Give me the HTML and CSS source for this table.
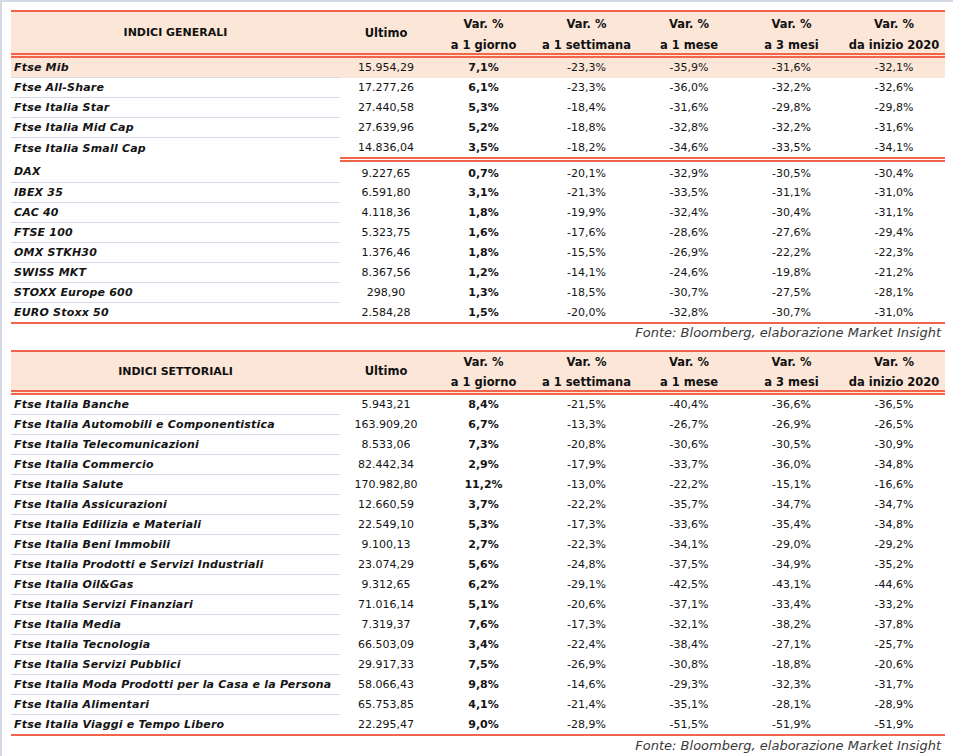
FILE: index.html
```html
<!DOCTYPE html>
<html lang="it">
<head>
<meta charset="utf-8">
<title>Indici</title>
<link rel="stylesheet" href="styles.css">
</head>
<body>
<div class="frame">
  <table class="grid grid-first">
    <colgroup>
      <col class="c-label"><col class="c-last"><col class="c-var"><col class="c-var"><col class="c-var2"><col class="c-var"><col class="c-var2">
    </colgroup>
    <thead>
      <tr>
        <th class="h-label">INDICI GENERALI</th>
        <th>Ultimo</th>
        <th><div class="hd">Var. %<br>a 1 giorno</div></th>
        <th><div class="hd">Var. %<br>a 1 settimana</div></th>
        <th><div class="hd">Var. %<br>a 1 mese</div></th>
        <th><div class="hd">Var. %<br>a 3 mesi</div></th>
        <th><div class="hd">Var. %<br>da inizio 2020</div></th>
      </tr>
    </thead>
    <tbody>
      <tr class="hl"><td class="lbl">Ftse Mib</td><td>15.954,29</td><td class="b">7,1%</td><td>-23,3%</td><td>-35,9%</td><td>-31,6%</td><td>-32,1%</td></tr>
      <tr><td class="lbl">Ftse All-Share</td><td>17.277,26</td><td class="b">6,1%</td><td>-23,3%</td><td>-36,0%</td><td>-32,2%</td><td>-32,6%</td></tr>
      <tr><td class="lbl">Ftse Italia Star</td><td>27.440,58</td><td class="b">5,3%</td><td>-18,4%</td><td>-31,6%</td><td>-29,8%</td><td>-29,8%</td></tr>
      <tr><td class="lbl">Ftse Italia Mid Cap</td><td>27.639,96</td><td class="b">5,2%</td><td>-18,8%</td><td>-32,8%</td><td>-32,2%</td><td>-31,6%</td></tr>
      <tr class="group-end"><td class="lbl">Ftse Italia Small Cap</td><td>14.836,04</td><td class="b">3,5%</td><td>-18,2%</td><td>-34,6%</td><td>-33,5%</td><td>-34,1%</td></tr>
      <tr class="group-start"><td class="lbl">DAX</td><td>9.227,65</td><td class="b">0,7%</td><td>-20,1%</td><td>-32,9%</td><td>-30,5%</td><td>-30,4%</td></tr>
      <tr><td class="lbl">IBEX 35</td><td>6.591,80</td><td class="b">3,1%</td><td>-21,3%</td><td>-33,5%</td><td>-31,1%</td><td>-31,0%</td></tr>
      <tr><td class="lbl">CAC 40</td><td>4.118,36</td><td class="b">1,8%</td><td>-19,9%</td><td>-32,4%</td><td>-30,4%</td><td>-31,1%</td></tr>
      <tr><td class="lbl">FTSE 100</td><td>5.323,75</td><td class="b">1,6%</td><td>-17,6%</td><td>-28,6%</td><td>-27,6%</td><td>-29,4%</td></tr>
      <tr><td class="lbl">OMX STKH30</td><td>1.376,46</td><td class="b">1,8%</td><td>-15,5%</td><td>-26,9%</td><td>-22,2%</td><td>-22,3%</td></tr>
      <tr><td class="lbl">SWISS MKT</td><td>8.367,56</td><td class="b">1,2%</td><td>-14,1%</td><td>-24,6%</td><td>-19,8%</td><td>-21,2%</td></tr>
      <tr><td class="lbl">STOXX Europe 600</td><td>298,90</td><td class="b">1,3%</td><td>-18,5%</td><td>-30,7%</td><td>-27,5%</td><td>-28,1%</td></tr>
      <tr class="last"><td class="lbl">EURO Stoxx 50</td><td>2.584,28</td><td class="b">1,5%</td><td>-20,0%</td><td>-32,8%</td><td>-30,7%</td><td>-31,0%</td></tr>
    </tbody>
  </table>
  <div class="source source-first">Fonte: Bloomberg, elaborazione Market Insight</div>

  <table class="grid grid-second">
    <colgroup>
      <col class="c-label"><col class="c-last"><col class="c-var"><col class="c-var"><col class="c-var2"><col class="c-var"><col class="c-var2">
    </colgroup>
    <thead>
      <tr>
        <th class="h-label">INDICI SETTORIALI</th>
        <th>Ultimo</th>
        <th><div class="hd">Var. %<br>a 1 giorno</div></th>
        <th><div class="hd">Var. %<br>a 1 settimana</div></th>
        <th><div class="hd">Var. %<br>a 1 mese</div></th>
        <th><div class="hd">Var. %<br>a 3 mesi</div></th>
        <th><div class="hd">Var. %<br>da inizio 2020</div></th>
      </tr>
    </thead>
    <tbody>
      <tr><td class="lbl">Ftse Italia Banche</td><td>5.943,21</td><td class="b">8,4%</td><td>-21,5%</td><td>-40,4%</td><td>-36,6%</td><td>-36,5%</td></tr>
      <tr><td class="lbl">Ftse Italia Automobili e Componentistica</td><td>163.909,20</td><td class="b">6,7%</td><td>-13,3%</td><td>-26,7%</td><td>-26,9%</td><td>-26,5%</td></tr>
      <tr><td class="lbl">Ftse Italia Telecomunicazioni</td><td>8.533,06</td><td class="b">7,3%</td><td>-20,8%</td><td>-30,6%</td><td>-30,5%</td><td>-30,9%</td></tr>
      <tr><td class="lbl">Ftse Italia Commercio</td><td>82.442,34</td><td class="b">2,9%</td><td>-17,9%</td><td>-33,7%</td><td>-36,0%</td><td>-34,8%</td></tr>
      <tr><td class="lbl">Ftse Italia Salute</td><td>170.982,80</td><td class="b">11,2%</td><td>-13,0%</td><td>-22,2%</td><td>-15,1%</td><td>-16,6%</td></tr>
      <tr><td class="lbl">Ftse Italia Assicurazioni</td><td>12.660,59</td><td class="b">3,7%</td><td>-22,2%</td><td>-35,7%</td><td>-34,7%</td><td>-34,7%</td></tr>
      <tr><td class="lbl">Ftse Italia Edilizia e Materiali</td><td>22.549,10</td><td class="b">5,3%</td><td>-17,3%</td><td>-33,6%</td><td>-35,4%</td><td>-34,8%</td></tr>
      <tr><td class="lbl">Ftse Italia Beni Immobili</td><td>9.100,13</td><td class="b">2,7%</td><td>-22,3%</td><td>-34,1%</td><td>-29,0%</td><td>-29,2%</td></tr>
      <tr><td class="lbl">Ftse Italia Prodotti e Servizi Industriali</td><td>23.074,29</td><td class="b">5,6%</td><td>-24,8%</td><td>-37,5%</td><td>-34,9%</td><td>-35,2%</td></tr>
      <tr><td class="lbl">Ftse Italia Oil&amp;Gas</td><td>9.312,65</td><td class="b">6,2%</td><td>-29,1%</td><td>-42,5%</td><td>-43,1%</td><td>-44,6%</td></tr>
      <tr><td class="lbl">Ftse Italia Servizi Finanziari</td><td>71.016,14</td><td class="b">5,1%</td><td>-20,6%</td><td>-37,1%</td><td>-33,4%</td><td>-33,2%</td></tr>
      <tr><td class="lbl">Ftse Italia Media</td><td>7.319,37</td><td class="b">7,6%</td><td>-17,3%</td><td>-32,1%</td><td>-38,2%</td><td>-37,8%</td></tr>
      <tr><td class="lbl">Ftse Italia Tecnologia</td><td>66.503,09</td><td class="b">3,4%</td><td>-22,4%</td><td>-38,4%</td><td>-27,1%</td><td>-25,7%</td></tr>
      <tr><td class="lbl">Ftse Italia Servizi Pubblici</td><td>29.917,33</td><td class="b">7,5%</td><td>-26,9%</td><td>-30,8%</td><td>-18,8%</td><td>-20,6%</td></tr>
      <tr><td class="lbl">Ftse Italia Moda Prodotti per la Casa e la Persona</td><td>58.066,43</td><td class="b">9,8%</td><td>-14,6%</td><td>-29,3%</td><td>-32,3%</td><td>-31,7%</td></tr>
      <tr><td class="lbl">Ftse Italia Alimentari</td><td>65.753,85</td><td class="b">4,1%</td><td>-21,4%</td><td>-35,1%</td><td>-28,1%</td><td>-28,9%</td></tr>
      <tr class="last"><td class="lbl">Ftse Italia Viaggi e Tempo Libero</td><td>22.295,47</td><td class="b">9,0%</td><td>-28,9%</td><td>-51,5%</td><td>-51,9%</td><td>-51,9%</td></tr>
    </tbody>
  </table>
  <div class="source source-second">Fonte: Bloomberg, elaborazione Market Insight</div>
</div>
</body>
</html>
```
FILE: styles.css
```css
html, body {
  margin: 0;
  padding: 0;
  background: #ffffff;
}

body {
  font-family: "DejaVu Sans", "Liberation Sans", sans-serif;
  font-size: 11px;
  color: #141414;
}

.frame {
  box-sizing: border-box;
  min-height: 100vh;
  border-top: 2px solid #d3dae6;
  border-left: 2px solid #d3dae6;
  padding: 8px 0 0 9px;
}

.grid {
  width: 934px;
  border-collapse: collapse;
  table-layout: fixed;
  border-top: 2px solid #f2654b;
  border-bottom: 2px solid #f2654b;
}

.c-label { width: 329px; }
.c-last { width: 92px; }
.c-var { width: 103px; }
.c-var2 { width: 102px; }

.grid thead th {
  background: #fce6d8;
  font-weight: bold;
  font-size: 11.5px;
  text-align: center;
  vertical-align: middle;
  padding: 0;
  border-bottom: 5px double #f2654b;
  color: #111;
}

.grid thead th.h-label {
  font-size: 11px;
}

.hd {
  box-sizing: border-box;
  overflow: visible;
}

.grid-first thead th {
  height: 41px;
}

.grid-first .hd {
  height: 41px;
  padding-top: 2px;
  line-height: 20.5px;
}

.grid-second thead th {
  height: 38px;
}

.grid-second .hd {
  height: 38px;
  padding-top: 1px;
  line-height: 19.5px;
}

.grid tbody td {
  height: 19px;
  padding: 0;
  text-align: center;
  vertical-align: middle;
  line-height: 19px;
  white-space: nowrap;
}

.grid tbody td.lbl {
  text-align: left;
  padding-left: 3px;
  font-weight: bold;
  font-style: italic;
  letter-spacing: 0.2px;
  border-bottom: 1px solid #d5dbe6;
}

.grid tbody tr.last td.lbl,
.grid tbody tr.group-end td.lbl {
  border-bottom: none;
}

.grid tbody tr.group-end td {
  border-bottom: 5px double #f2654b;
}

.grid tbody tr.group-start td {
  padding-top: 2px;
}

.grid tbody td.b {
  font-weight: bold;
}

.grid tbody tr.hl td {
  background: #fce6d8;
}

.source {
  width: 930px;
  text-align: right;
  font-size: 13px;
  font-style: italic;
  color: #3a3a3a;
  line-height: 16px;
  padding-top: 1px;
}

.source-first {
  margin-bottom: 9px;
}

.source-second {
  padding-top: 2px;
}
```
